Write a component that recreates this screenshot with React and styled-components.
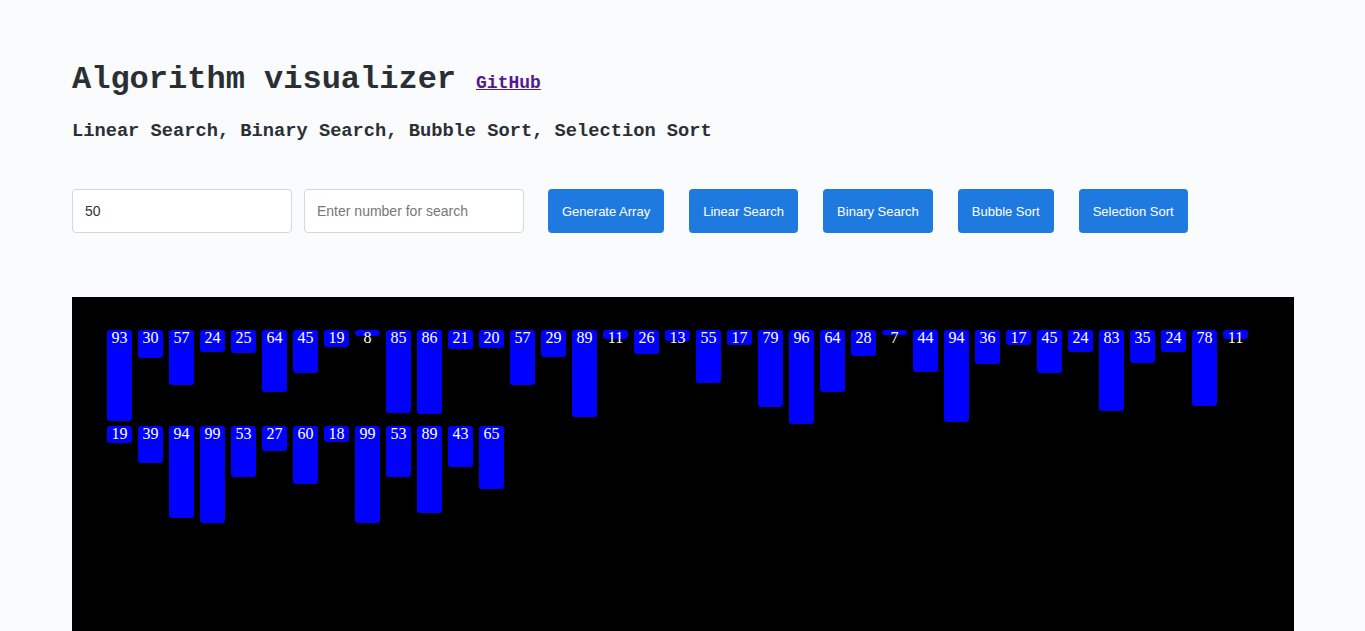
import React from 'react';
import styled, { createGlobalStyle } from 'styled-components';

const GlobalStyle = createGlobalStyle`
  html, body {
    margin: 0;
    padding: 0;
    background: #f9fbfd;
  }
`

const Page = styled.div`
  padding: 61px 71px 0 72px;
  height: 631px;
  overflow: hidden;
  box-sizing: border-box;
`

const Header = styled.div`
  display: flex;
  align-items: baseline;
  gap: 20px;
`

const Title = styled.h1`
  font-family: "Liberation Mono", "Courier New", monospace;
  font-size: 32px;
  font-weight: 700;
  color: #2b2f33;
  margin: 0;
`

const GitLink = styled.a`
  font-family: "Liberation Mono", "Courier New", monospace;
  font-size: 18px;
  font-weight: 700;
  color: #551a8b;
  text-decoration: underline;
`

const Subtitle = styled.h3`
  font-family: "Liberation Mono", "Courier New", monospace;
  font-size: 18.72px;
  font-weight: 700;
  color: #2b2f33;
  margin: 22px 0 0;
`

const Controls = styled.div`
  display: flex;
  align-items: center;
  margin-top: 47px;
`

const Field = styled.input`
  box-sizing: border-box;
  width: 220px;
  height: 44px;
  border: 1px solid #d3d6da;
  border-radius: 4px;
  background: #fff;
  padding: 0 12px;
  font-family: "Liberation Sans", Arial, sans-serif;
  font-size: 14px;
  color: #333;
  margin-right: ${p => p.$gap}px;
  outline: none;

  &::placeholder {
    color: #777;
  }
`

const Button = styled.button`
  height: 44px;
  padding: 0 14px;
  border: none;
  border-radius: 4px;
  background: #1f7ae0;
  color: #fff;
  font-family: "Liberation Sans", Arial, sans-serif;
  font-size: 13px;
  margin-right: 25px;
  cursor: pointer;
`

const Board = styled.div`
  margin-top: 64px;
  background: #000;
  height: 400px;
  padding: 33px 32px 0;
  display: flex;
  flex-wrap: wrap;
  align-items: flex-start;
  align-content: flex-start;
`

const Bar = styled.div`
  width: 25px;
  margin: 0 3px 2px;
  background: #0000ff;
  border-radius: 3px;
  color: #fff;
  font-family: "Liberation Serif", "Times New Roman", serif;
  font-size: 16px;
  line-height: 16px;
  text-align: center;
  white-space: nowrap;
`

const values = [
  93, 30, 57, 24, 25, 64, 45, 19, 8, 85, 86, 21, 20, 57, 29, 89, 11, 26, 13, 55,
  17, 79, 96, 64, 28, 7, 44, 94, 36, 17, 45, 24, 83, 35, 24, 78, 11,
  19, 39, 94, 99, 53, 27, 60, 18, 99, 53, 89, 43, 65,
];

const buttons = ['Generate Array', 'Linear Search', 'Binary Search', 'Bubble Sort', 'Selection Sort'];

const App = () => (
  <Page>
    <GlobalStyle />
    <Header>
      <Title>Algorithm visualizer</Title>
      <GitLink href="#">GitHub</GitLink>
    </Header>
    <Subtitle>Linear Search, Binary Search, Bubble Sort, Selection Sort</Subtitle>
    <Controls>
      <Field $gap={12} defaultValue="50" />
      <Field $gap={24} placeholder="Enter number for search" />
      {buttons.map(label => (
        <Button key={label}>{label}</Button>
      ))}
    </Controls>
    <Board>
      {values.map((v, i) => (
        <Bar key={i} style={{ height: v - 2 }}>{v}</Bar>
      ))}
    </Board>
  </Page>
);

export default App;
